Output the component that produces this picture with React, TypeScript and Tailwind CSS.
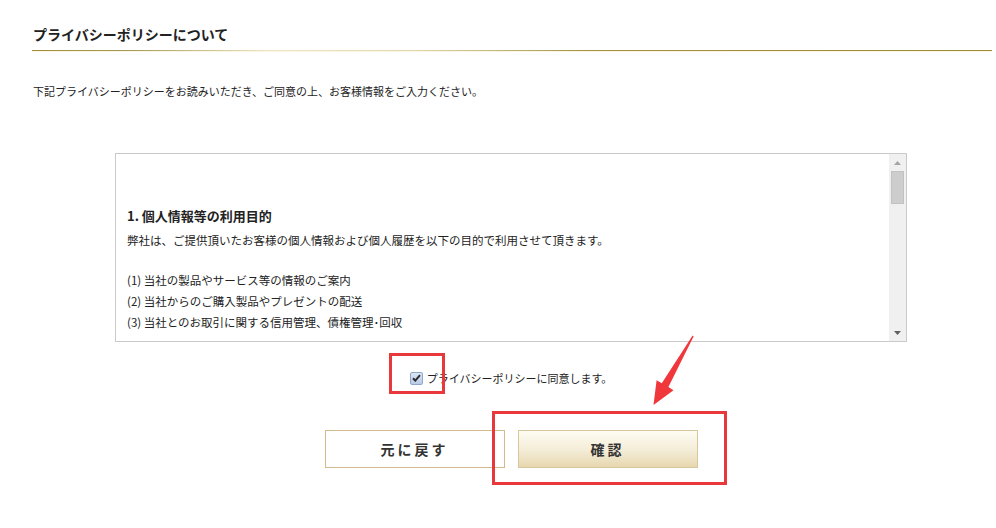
import React, { useState } from "react";

const jp = { fontFamily: '"Noto Sans CJK JP", "Noto Sans", sans-serif' };

const purposes = [
  "(1) 当社の製品やサービス等の情報のご案内",
  "(2) 当社からのご購入製品やプレゼントの配送",
  "(3) 当社とのお取引に関する信用管理、債権管理･回収",
];

const Scrollbar: React.FC = () => (
  <div className="w-[17px] bg-[#f0f0f0] flex flex-col items-center">
    <div className="h-[17px] flex items-center justify-center">
      <svg width="7" height="4" viewBox="0 0 7 4"><path d="M3.5 0L7 4H0z" fill="#a3a3a3" /></svg>
    </div>
    <div className="w-[13px] h-[33px] bg-[#cdcdcd] border border-[#c2c2c2]" />
    <div className="flex-1" />
    <div className="h-[17px] flex items-center justify-center">
      <svg width="7" height="4" viewBox="0 0 7 4"><path d="M0 0H7L3.5 4z" fill="#606060" /></svg>
    </div>
  </div>
);

const App: React.FC = () => {
  const [agree, setAgree] = useState(true);

  return (
    <div className="relative w-[996px] h-[528px] bg-white text-[#222] overflow-hidden" style={jp}>
      <div className="pl-[32px] pr-[4px] pt-[24px]">
        <h2 className="text-[14px] font-bold leading-[20px] pl-px">プライバシーポリシーについて</h2>
        <div className="mt-[6px] h-px bg-[linear-gradient(to_right,#a08f3c_0%,#a99a55_10%,#eee6ca_25%,#e2d6ac_40%,#a39244_58%,#9c8d36_100%)]" />
        <div className="h-px bg-[#faf6e6]" />
        <p className="mt-[31px] text-[11px] leading-[16px] pl-px">
          下記プライバシーポリシーをお読みいただき、ご同意の上、お客様情報をご入力ください。
        </p>
      </div>

      <div className="ml-[115px] w-[792px] mt-[54px] flex flex-col items-center">
        <div className="w-full h-[189px] border border-[#cacaca] flex">
          <div className="flex-1 pl-[11px] pt-[50px] text-[11.5px] leading-[21px] overflow-hidden">
            <h3 className="font-bold text-[13px] leading-[24px]">1. 個人情報等の利用目的</h3>
            <p className="mt-[2px]">弊社は、ご提供頂いたお客様の個人情報および個人履歴を以下の目的で利用させて頂きます。</p>
            <div className="h-[19px]" />
            {purposes.map((p) => (
              <p key={p}>{p}</p>
            ))}
          </div>
          <Scrollbar />
        </div>

        <label className="mt-[28px] flex items-center gap-[4px] text-[11px] leading-[16px] cursor-pointer">
          <span
            onClick={() => setAgree(!agree)}
            className="w-[13px] h-[13px] rounded-[2px] border border-[#8ea7c9] bg-[linear-gradient(#dbe6f5,#b9cbe6)] flex items-center justify-center"
          >
            {agree && (
              <svg width="9" height="8" viewBox="0 0 9 8">
                <path d="M1 4.2L3.3 6.6L8 1.2" stroke="#2b2b2b" strokeWidth="2" fill="none" />
              </svg>
            )}
          </span>
          <span>プライバシーポリシーに同意します。</span>
        </label>

        <div className="mt-[44px] flex gap-[13px]">
          <button className="w-[180px] h-[38px] bg-white border border-[#d2b98e] text-[14px] font-bold tracking-[3px] text-[#333]">
            元に戻す
          </button>
          <button className="w-[180px] h-[38px] border border-[#d8c69c] bg-[linear-gradient(#fdfbf2,#f3ecd6_55%,#e6d7ae)] text-[14px] font-bold tracking-[3px] text-[#333]">
            確認
          </button>
        </div>
      </div>

      {/* annotation overlays */}
      <div className="absolute left-[389px] top-[353px] w-[56px] h-[41px] border-[3px] border-[#e8383c]" />
      <div className="absolute left-[492px] top-[411px] w-[235px] h-[74px] border-[3px] border-[#e8383c]" />
      <svg className="absolute left-0 top-0 pointer-events-none" width="996" height="528">
        <polygon
          points="692.6,335.6 693.6,336.4 668.4,387 673.5,390.2 653.5,405 656.6,380.2 661.8,383.2"
          fill="#f0383c"
        />
      </svg>
    </div>
  );
};

export default App;
